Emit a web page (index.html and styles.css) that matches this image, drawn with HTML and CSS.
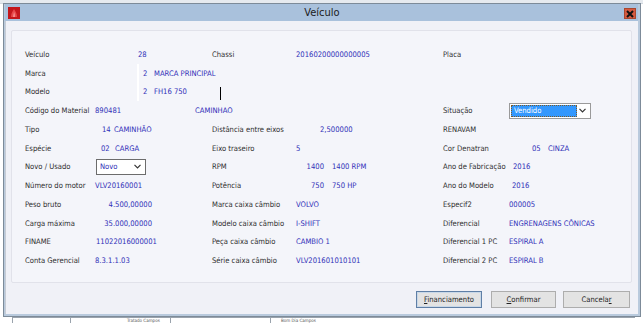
FILE: index.html
```html
<!DOCTYPE html>
<html lang="pt">
<head>
<meta charset="utf-8">
<title>Veículo</title>
<link rel="stylesheet" href="styles.css">
</head>
<body>
<div class="topstrip"></div>
<div class="window">
  <div class="titlebar">
    <svg class="appicon" width="12" height="12" viewBox="0 0 12 12">
      <rect x="0" y="0" width="12" height="12" fill="#c4161c"/>
      <path d="M3 10 C3 6 5 4 6 2 C7 4 9 6 9 10 Z" fill="#e8474a"/>
      <path d="M5 10 C5 8 6 6 6 5 C7 7 7 8 7 10 Z" fill="#f58a8a"/>
    </svg>
    <span class="title">Veículo</span>
    <span class="close">
      <svg width="8" height="8" viewBox="0 0 8 8"><path d="M1 1 L7 7 M7 1 L1 7" stroke="#111" stroke-width="2"/></svg>
    </span>
  </div>
  <div class="client">
    <div class="panel">
      <div class="row">
        <span class="lbl">Veículo</span><span class="val"><span class="pl43">28</span></span>
        <span class="lbl">Chassi</span><span class="val">20160200000000005</span>
        <span class="lbl">Placa</span><span class="val"></span>
      </div>
      <div class="row">
        <span class="lbl">Marca</span><span class="val"><span class="field"><span class="code">2</span>MARCA PRINCIPAL</span></span>
        <span class="lbl"></span><span class="val"></span>
        <span class="lbl"></span><span class="val"></span>
      </div>
      <div class="row">
        <span class="lbl">Modelo</span><span class="val"><span class="field"><span class="code">2</span>FH16 750</span></span>
        <span class="lbl"><span class="caret"></span></span><span class="val"></span>
        <span class="lbl"></span><span class="val"></span>
      </div>
      <div class="row">
        <span class="lbl">Código do Material</span><span class="val">890481<span class="desc">CAMINHAO</span></span>
        <span class="lbl"></span><span class="val"></span>
        <span class="lbl">Situação</span><span class="val"><span class="select sel-focus"><span class="selected">Vendido</span><svg class="chev" width="7" height="5" viewBox="0 0 7 5"><path d="M0.5 0.8 L3.5 3.8 L6.5 0.8" fill="none" stroke="#333" stroke-width="1.2"/></svg></span></span>
      </div>
      <div class="row">
        <span class="lbl">Tipo</span><span class="val"><span class="pl7 w12">14</span>CAMINHÃO</span>
        <span class="lbl">Distância entre eixos</span><span class="val"><span class="pl24">2,500000</span></span>
        <span class="lbl">RENAVAM</span><span class="val"></span>
      </div>
      <div class="row">
        <span class="lbl">Espécie</span><span class="val"><span class="pl6 w14">02</span>CARGA</span>
        <span class="lbl">Eixo traseiro</span><span class="val">5</span>
        <span class="lbl">Cor Denatran</span><span class="val"><span class="pl23 w16">05</span>CINZA</span>
      </div>
      <div class="row">
        <span class="lbl">Novo / Usado</span><span class="val"><span class="select sel-novo"><span class="opt">Novo</span><svg class="chev" width="7" height="5" viewBox="0 0 7 5"><path d="M0.5 0.8 L3.5 3.8 L6.5 0.8" fill="none" stroke="#333" stroke-width="1.2"/></svg></span></span>
        <span class="lbl">RPM</span><span class="val"><span class="num">1400</span>1400 RPM</span>
        <span class="lbl">Ano de Fabricação</span><span class="val"><span class="pl4">2016</span></span>
      </div>
      <div class="row">
        <span class="lbl">Número do motor</span><span class="val">VLV20160001</span>
        <span class="lbl">Potência</span><span class="val"><span class="num">750</span>750 HP</span>
        <span class="lbl">Ano do Modelo</span><span class="val"><span class="pl3">2016</span></span>
      </div>
      <div class="row">
        <span class="lbl">Peso bruto</span><span class="val"><span class="amount">4.500,00000</span></span>
        <span class="lbl">Marca caixa câmbio</span><span class="val">VOLVO</span>
        <span class="lbl">Especif2</span><span class="val">000005</span>
      </div>
      <div class="row">
        <span class="lbl">Carga máxima</span><span class="val"><span class="amount">35.000,00000</span></span>
        <span class="lbl">Modelo caixa câmbio</span><span class="val">I-SHIFT</span>
        <span class="lbl">Diferencial</span><span class="val">ENGRENAGENS CÔNICAS</span>
      </div>
      <div class="row">
        <span class="lbl">FINAME</span><span class="val"><span class="pl1">11022016000001</span></span>
        <span class="lbl">Peça caixa câmbio</span><span class="val">CAMBIO 1</span>
        <span class="lbl">Diferencial 1 PC</span><span class="val">ESPIRAL A</span>
      </div>
      <div class="row">
        <span class="lbl">Conta Gerencial</span><span class="val">8.3.1.1.03</span>
        <span class="lbl">Série caixa câmbio</span><span class="val">VLV201601010101</span>
        <span class="lbl">Diferencial 2 PC</span><span class="val">ESPIRAL B</span>
      </div>
    </div>
    <div class="buttons">
      <button class="btn btn-default"><u>F</u>inanciamento</button>
      <button class="btn btn-confirm"><u>C</u>onfirmar</button>
      <button class="btn btn-cancel">Cancela<u>r</u></button>
    </div>
  </div>
</div>
<div class="behind">
  <span class="cell c1"></span>
  <span class="cell c2">Tratado Campos</span>
  <span class="cell c3"></span>
  <span class="cell c4">Bom Dia Campos</span>
</div>
</body>
</html>
```
FILE: styles.css
```css
* { box-sizing: border-box; }
html, body { margin: 0; padding: 0; }
body {
  width: 643px;
  height: 324px;
  overflow: hidden;
  background: #ffffff;
  font-family: "DejaVu Sans Condensed", "DejaVu Sans", "Liberation Sans", sans-serif;
  font-stretch: condensed;
  font-size: 7.6px;
  color: #333;
}
.topstrip {
  height: 4px;
  background: #e6eaef;
  border-bottom: 1px solid #d2d8de;
}
.window {
  margin-left: 3px;
  margin-top: -1px;
  width: 638px;
  height: 314px;
  border: 1px solid #7d8b99;
  background: #b9cadd;
  padding: 0 2px 2px 1px;
  display: flex;
  flex-direction: column;
}
.titlebar {
  height: 17px;
  background: #a9c1dc;
  display: flex;
  align-items: center;
  padding: 0 2px 0 3px;
}
.appicon { display: block; }
.title {
  flex: 1;
  text-align: center;
  font-size: 11px;
  color: #1c1c1c;
  font-stretch: normal;
  font-family: "DejaVu Sans Condensed", "DejaVu Sans", sans-serif;
}
.close {
  width: 12px;
  height: 11px;
  background: #d65a40;
  border: 1px solid #a9472f;
  display: flex;
  align-items: center;
  justify-content: center;
  margin-top: 2px;
}
.close svg { display: block; }
.client {
  flex: 1;
  background: #f0f1f7;
  border-left: 1px solid #c7ccd4;
  padding: 9px 6px 0 5px;
}
.panel {
  height: 253px;
  background: #f4f5fa;
  border: 1px solid #e1e2ea;
  border-radius: 2px;
  padding: 14px 0 0 13px;
}
.row {
  display: grid;
  grid-template-columns: 70px 117px 84px 147px 66px 1fr;
  height: 18.76px;
  align-items: center;
  white-space: nowrap;
}
.lbl { color: #2e2e2e; display: flex; align-items: center; height: 100%; }
.val { color: #2f2fb8; display: flex; align-items: center; height: 100%; }
.pl1 { padding-left: 1px; }
.pl3 { padding-left: 3px; }
.pl4 { padding-left: 4px; }
.pl43 { padding-left: 43px; }
.pl24 { padding-left: 24px; }
.pl7 { padding-left: 7px; }
.pl6 { padding-left: 6px; }
.pl23 { padding-left: 23px; }
.w12 { width: 19px; display: inline-block; }
.w14 { width: 20px; display: inline-block; }
.w16 { width: 39px; display: inline-block; }
.field {
  margin-left: 42px;
  height: 100%;
  border-left: 2px solid #ffffff;
  display: flex;
  align-items: center;
  padding-left: 4px;
}
.code { width: 11px; display: inline-block; }
.caret {
  margin-left: 8px;
  margin-top: 4px;
  width: 1px;
  height: 13px;
  background: #000;
}
.desc { margin-left: 74px; }
.num { width: 28px; text-align: right; display: inline-block; margin-right: 8px; }
.amount { width: 57px; text-align: right; display: inline-block; }
.select {
  height: 16px;
  border: 1px solid #8a8a8a;
  background: #ffffff;
  display: flex;
  align-items: center;
}
.sel-novo { width: 50px; margin-left: 1px; border-color: #6c6c6c; }
.sel-novo .opt { padding-left: 3px; flex: 1; color: #2f2fb8; }
.sel-focus { width: 82px; border-color: #9a9a9a; padding-left: 1px; }
.selected {
  width: 66px;
  height: 12px;
  background: #3398fe;
  border: 1px dotted #7a5a2a;
  color: #ffffff;
  padding-left: 2px;
  line-height: 10px;
}
.chev { margin-left: auto; margin-right: 4px; display: block; }
.buttons {
  display: flex;
  justify-content: flex-end;
  padding-top: 8px;
  padding-right: 2px;
}
.btn {
  height: 17px;
  font-family: inherit;
  font-size: 7.6px;
  font-stretch: condensed;
  color: #222;
  background: #e3e3e3;
  border: 1px solid #adadad;
  padding: 0;
  margin: 0;
}
.btn u { text-decoration: underline; }
.btn-default { width: 66px; border-color: #5f7fa6; box-shadow: inset 0 0 0 1px #c9d8e8; }
.btn-confirm { width: 65px; margin-left: 9px; }
.btn-cancel { width: 67px; margin-left: 7px; }
.behind {
  height: 6px;
  background: #ffffff;
  border-top: 1px solid #9aa3ad;
  display: flex;
  margin-left: 12px;
  margin-right: 8px;
  color: #555;
  font-size: 4.5px;
  line-height: 5px;
  overflow: hidden;
}
.cell {
  border-left: 1px solid #9aa3ad;
  height: 5px;
  padding-left: 4px;
}
.c1 { width: 58px; }
.c2 { width: 100px; padding-left: 56px; }
.c3 { width: 100px; }
.c4 { width: 120px; padding-left: 10px; }
```
